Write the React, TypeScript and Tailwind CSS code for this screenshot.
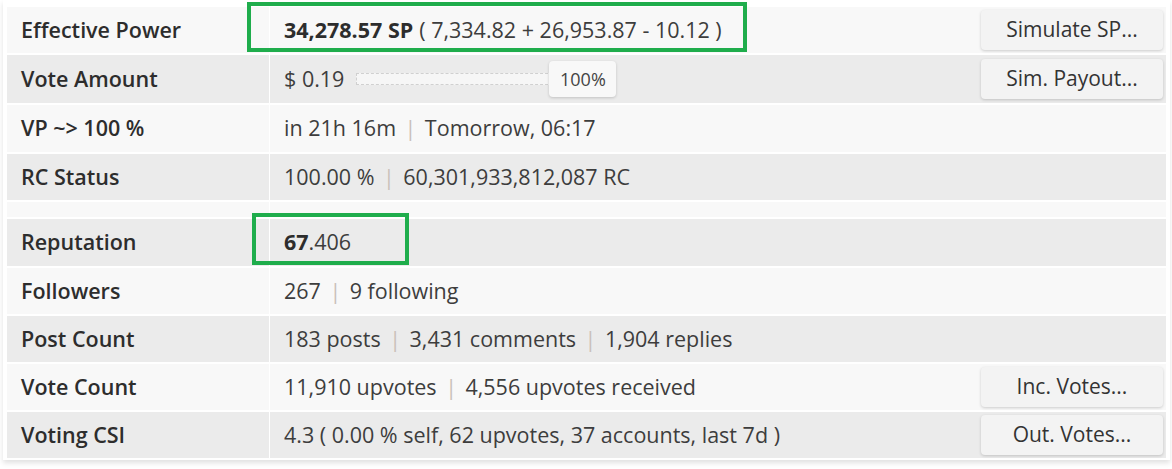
import { ReactNode } from 'react';

const Sep = () => <span className="mx-[8.5px] text-[#c9c0b9]">|</span>;

function Btn({ children }: { children: ReactNode }) {
  return (
    <button className="ml-auto mr-[3px] flex h-[40px] w-[182px] items-center justify-center rounded-[4px] bg-[#f3f3f3] text-[21px] text-[#333] shadow-[0_1px_3px_rgba(0,0,0,0.18)]">
      {children}
    </button>
  );
}

function Row({
  label,
  children,
  h,
  shade,
}: {
  label: string;
  children?: ReactNode;
  h: string;
  shade: boolean;
}) {
  const bg = shade ? 'bg-[#ebebeb]' : 'bg-[#f8f8f8]';
  return (
    <div className={`flex gap-px ${h}`}>
      <div className={`flex w-[262px] shrink-0 items-center px-[14px] font-semibold text-[#2d2d2d] ${bg}`}>
        {label}
      </div>
      <div className={`flex flex-1 items-center whitespace-pre px-[14px] pr-0 text-[#3d3d3d] ${bg}`}>{children}</div>
    </div>
  );
}

export default function App() {
  return (
    <div
      className="relative h-[469px] w-[1172px] bg-white text-[21.5px]"
      style={{ fontFamily: '"Open Sans", "Liberation Sans", sans-serif' }}
    >
      <div className="ml-[3px] w-[1167px] bg-white px-[4px] pb-[2px] pt-[7px] shadow-[0_3px_5px_rgba(0,0,0,0.12)]">
        <div className="flex flex-col gap-[2px]">
          <Row label="Effective Power" h="h-[46px]" shade={false}>
            <span className="font-bold text-[#2d2d2d]">34,278.57 SP</span>
            <span className="ml-[6px]">( 7,334.82 + 26,953.87 - 10.12 )</span>
            <Btn>Simulate SP...</Btn>
          </Row>
          <Row label="Vote Amount" h="h-[48px]" shade>
            <span>$ 0.19</span>
            <div className="relative ml-[12px] flex items-center">
              <div className="h-[12px] w-[197px] border border-dashed border-[#d0d0d0] bg-[#f6f6f6]" />
              <div className="-ml-[4px] flex h-[36px] w-[67px] items-center justify-center rounded-[4px] bg-[#f8f8f8] text-[18px] text-[#444] shadow-[0_1px_3px_rgba(0,0,0,0.18)]">
                100%
              </div>
            </div>
            <Btn>Sim. Payout...</Btn>
          </Row>
          <Row label="VP ~> 100 %" h="h-[47px]" shade={false}>
            in 21h 16m
            <Sep />
            Tomorrow, 06:17
          </Row>
          <Row label="RC Status" h="h-[46px]" shade>
            100.00 %
            <Sep />
            60,301,933,812,087 RC
          </Row>
          <Row label="" h="h-[15px]" shade={false} />
          <Row label="Reputation" h="h-[47px]" shade>
            <span className="font-bold text-[#2d2d2d]">67</span>.406
          </Row>
          <Row label="Followers" h="h-[46px]" shade={false}>
            267
            <Sep />9 following
          </Row>
          <Row label="Post Count" h="h-[46px]" shade>
            183 posts
            <Sep />
            3,431 comments
            <Sep />
            1,904 replies
          </Row>
          <Row label="Vote Count" h="h-[46px]" shade={false}>
            11,910 upvotes
            <Sep />
            4,556 upvotes received
            <Btn>Inc. Votes...</Btn>
          </Row>
          <Row label="Voting CSI" h="h-[46px]" shade>
            4.3 ( 0.00 % self, 62 upvotes, 37 accounts, last 7d )
            <Btn>Out. Votes...</Btn>
          </Row>
        </div>
      </div>

      {/* annotation boxes */}
      <div className="pointer-events-none absolute left-[247px] top-[2px] h-[50px] w-[500px] border-4 border-[#1fad4c]" />
      <div className="pointer-events-none absolute left-[252px] top-[213px] h-[52px] w-[157px] border-4 border-[#1fad4c]" />
    </div>
  );
}
